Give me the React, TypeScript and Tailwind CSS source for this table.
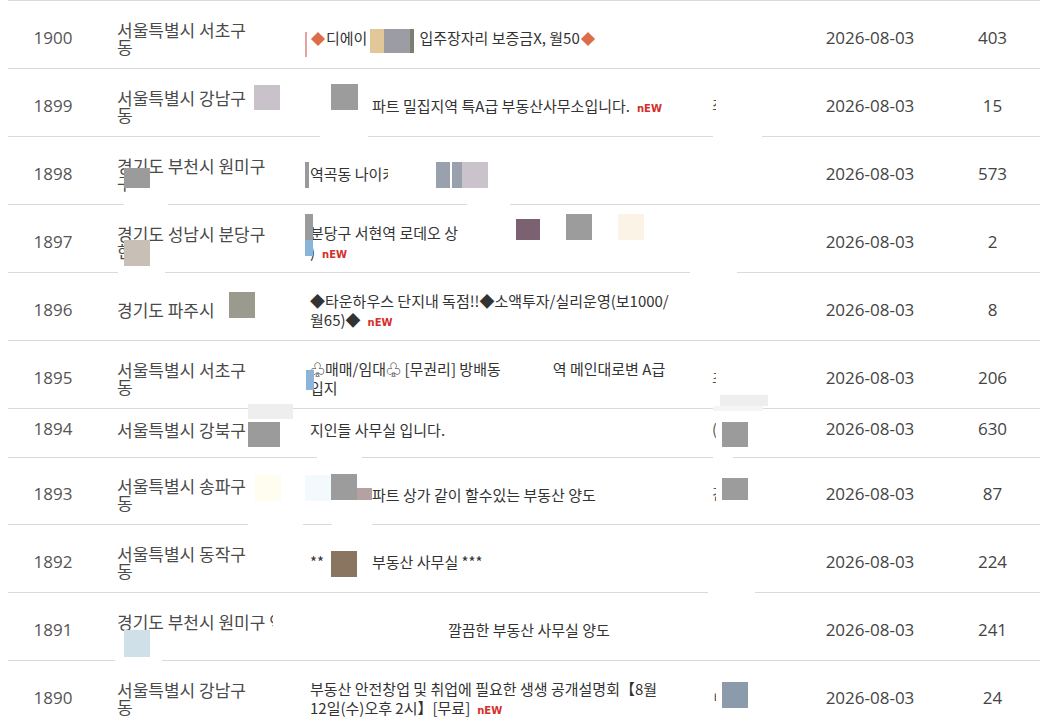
import React from "react";

type Row = {
  no: string;
  loc: React.ReactNode;
  title: React.ReactNode;
  author?: React.ReactNode;
  views: string;
  h: string;
  pad: string;
};

const New = () => (
  <span className="ml-[7px] inline-block align-baseline text-[10px] font-bold leading-none tracking-[0px] text-[#d3302b] [font-family:'DejaVu_Sans',sans-serif]">
    nEW
  </span>
);

const OrangeDiamond = () => (
  <span className="mx-[3px] inline-block h-[10px] w-[10px] rotate-45 bg-[#dc6c4a] align-[0px]" />
);

const Frag = ({ ch }: { ch: string }) => (
  <span className="inline-block w-[4px] overflow-hidden align-top">{ch}</span>
);

const rows: Row[] = [
  {
    no: "1900",
    loc: (<>서울특별시 서초구<br />동</>),
    title: (
      <>
        <OrangeDiamond />디에이<span className="inline-block w-[52px]" />입주장자리 보증금X, 월50<OrangeDiamond />
      </>
    ),
    views: "403",
    h: "h-[68px]",
    pad: "pt-[6px]",
  },
  {
    no: "1899",
    loc: (<>서울특별시 강남구<br />동</>),
    title: (
      <>
        <span className="inline-block w-[62px]" />파트 밀집지역 특A급 부동산사무소입니다.<New />
      </>
    ),
    author: <Frag ch="최" />,
    views: "15",
    h: "h-[68px]",
    pad: "pt-[6px]",
  },
  {
    no: "1898",
    loc: (<>경기도 부천시 원미구<br />구</>),
    title: <>역곡동 나이키</>,
    views: "573",
    h: "h-[68px]",
    pad: "pt-[6px]",
  },
  {
    no: "1897",
    loc: (<>경기도 성남시 분당구<br />현</>),
    title: (
      <>
        분당구 서현역 로데오 상<br />)<New />
      </>
    ),
    views: "2",
    h: "h-[68px]",
    pad: "pt-[6px]",
  },
  {
    no: "1896",
    loc: <>경기도 파주시</>,
    title: (
      <>
        ◆타운하우스 단지내 독점!!◆소액투자/실리운영(보1000/<br />월65)◆<New />
      </>
    ),
    views: "8",
    h: "h-[68px]",
    pad: "pt-[6px]",
  },
  {
    no: "1895",
    loc: (<>서울특별시 서초구<br />동</>),
    title: (
      <>
        ♧매매/임대♧ [무권리] 방배동<span className="inline-block w-[52px]" />역 메인대로변 A급<br />입지
      </>
    ),
    author: <Frag ch="초" />,
    views: "206",
    h: "h-[68px]",
    pad: "pt-[6px]",
  },
  {
    no: "1894",
    loc: <>서울특별시 강북구</>,
    title: <>지인들 사무실 입니다.</>,
    author: <Frag ch="(" />,
    views: "630",
    h: "h-[49px]",
    pad: "pb-[8px]",
  },
  {
    no: "1893",
    loc: (<>서울특별시 송파구<br />동</>),
    title: (
      <>
        <span className="inline-block w-[62px]" />파트 상가 같이 할수있는 부동산 양도
      </>
    ),
    author: <Frag ch="긴" />,
    views: "87",
    h: "h-[67px]",
    pad: "pt-[6px]",
  },
  {
    no: "1892",
    loc: (<>서울특별시 동작구<br />동</>),
    title: (
      <>
        **<span className="inline-block w-[48px]" />부동산 사무실 ***
      </>
    ),
    views: "224",
    h: "h-[68px]",
    pad: "pt-[6px]",
  },
  {
    no: "1891",
    loc: (<>경기도 부천시 원미구 <Frag ch="역" /><br />&nbsp;</>),
    title: (
      <>
        <span className="inline-block w-[138px]" />깔끔한 부동산 사무실 양도
      </>
    ),
    views: "241",
    h: "h-[68px]",
    pad: "pt-[6px]",
  },
  {
    no: "1890",
    loc: (<>서울특별시 강남구<br />동</>),
    title: (
      <>
        부동산 안전창업 및 취업에 필요한 생생 공개설명회【8월<br />12일(수)오후 2시】[무료]<New />
      </>
    ),
    author: <Frag ch="ㅂ" />,
    views: "24",
    h: "h-[68px]",
    pad: "pt-[6px]",
  },
];

// redaction patches that lie over the list: [x, y, w, h, colour]
const patches: [number, number, number, number, string][] = [
  [305, 32, 2, 25, "#e3a3a0"],
  [370, 29, 14, 24, "#e2c898"],
  [384, 29, 26, 24, "#9b9ca4"],
  [410, 29, 4, 24, "#79806f"],
  [254, 85, 26, 25, "#cac2ca"],
  [331, 84, 27, 26, "#9c9c9c"],
  [320, 135, 48, 3, "#ffffff"],
  [713, 135, 49, 3, "#ffffff"],
  [124, 168, 26, 20, "#9b9b9b"],
  [305, 162, 4, 26, "#9a9a9a"],
  [388, 156, 48, 34, "#ffffff"],
  [436, 162, 14, 26, "#9aa1ae"],
  [452, 162, 10, 26, "#9aa1ae"],
  [462, 162, 26, 26, "#cbc3cb"],
  [124, 203, 44, 3, "#ffffff"],
  [467, 203, 43, 3, "#ffffff"],
  [124, 240, 26, 26, "#c8c0b6"],
  [305, 214, 8, 26, "#9b9b9b"],
  [305, 240, 8, 16, "#8cb4d8"],
  [516, 219, 24, 21, "#7c6173"],
  [566, 214, 26, 26, "#9c9c9c"],
  [618, 214, 26, 26, "#fbf3e5"],
  [118, 271, 47, 3, "#ffffff"],
  [690, 271, 47, 3, "#ffffff"],
  [229, 292, 26, 26, "#9b9a8e"],
  [306, 370, 8, 20, "#8cb4d8"],
  [720, 395, 48, 11, "#eeeeee"],
  [713, 406, 50, 5, "#f5f5f5"],
  [248, 404, 45, 15, "#eeeeee"],
  [248, 422, 32, 25, "#9b9b9b"],
  [722, 422, 26, 25, "#9b9b9b"],
  [317, 456, 45, 3, "#ffffff"],
  [713, 456, 20, 3, "#ffffff"],
  [255, 475, 26, 26, "#fffcf0"],
  [305, 475, 26, 26, "#f2fafd"],
  [331, 474, 26, 26, "#9c9c9c"],
  [357, 488, 15, 12, "#b4a2a2"],
  [722, 478, 26, 22, "#9c9c9c"],
  [248, 523, 55, 3, "#ffffff"],
  [332, 523, 40, 3, "#ffffff"],
  [331, 551, 26, 26, "#8a7560"],
  [708, 591, 47, 3, "#ffffff"],
  [124, 630, 26, 27, "#d0e0e9"],
  [115, 659, 47, 3, "#ffffff"],
  [722, 682, 26, 26, "#8b9bac"],
];

export default function App() {
  return (
    <div className="relative h-[728px] w-[1040px] overflow-hidden bg-white [font-family:'Noto_Sans_CJK_KR','Noto_Sans',sans-serif]">
      <div className="pl-[8px]">
        {rows.map((r) => (
          <div key={r.no} className={`flex items-center border-t border-[#dadada] ${r.h} ${r.pad}`}>
            <div className="w-[90px] text-center text-[17px] text-[#555] [font-family:'Open_Sans',sans-serif]">
              {r.no}
            </div>
            <div className="w-[202px] whitespace-nowrap pl-[19px] text-[17px] leading-[17px] text-[#4a4a4a]">
              {r.loc}
            </div>
            <div className="w-[400px] whitespace-nowrap pl-[10px] text-[15px] leading-[19px] text-[#333]">
              {r.title}
            </div>
            <div className="w-[95px] pl-[12px] text-[15px] text-[#555]">{r.author}</div>
            <div className="w-[150px] text-center text-[17px] text-[#444] [font-family:'Open_Sans',sans-serif]">
              2026-08-03
            </div>
            <div className="w-[95px] text-center text-[17px] text-[#444] [font-family:'Open_Sans',sans-serif]">
              {r.views}
            </div>
          </div>
        ))}
      </div>
      {patches.map(([x, y, w, h, c], i) => (
        <div
          key={i}
          className="absolute"
          style={{ left: x, top: y, width: w, height: h, background: c }}
        />
      ))}
    </div>
  );
}
